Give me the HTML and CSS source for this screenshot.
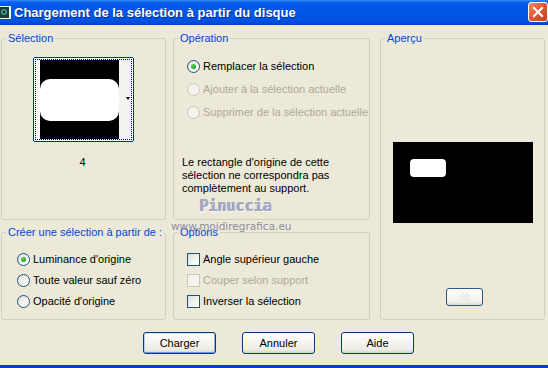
FILE: index.html
```html
<!DOCTYPE html>
<html lang="fr">
<head>
<meta charset="UTF-8">
<title>Chargement de la sélection à partir du disque</title>
<link rel="stylesheet" href="styles.css">
</head>
<body>
<div class="window">

<div class="titlebar">
  <span class="app-icon">
    <svg width="11" height="13" viewBox="0 0 11 13"><rect x="0" y="0" width="11" height="13" fill="#fff"/><rect x="0" y="1" width="9" height="11" fill="#1b3a4a"/><circle cx="4" cy="6" r="3" fill="#3fa86a"/><circle cx="4" cy="6" r="1.4" fill="#123"/></svg>
  </span>
  <span class="title">Chargement de la sélection à partir du disque</span>
  <span class="close">
    <svg width="18" height="18" viewBox="0 0 18 18"><path d="M5 5 L13 13 M13 5 L5 13" stroke="#fff" stroke-width="2.2" stroke-linecap="square"/></svg>
  </span>
</div>

<div class="content">
  <div class="groups">

    <fieldset class="group g-selection">
      <legend>Sélection</legend>
      <div class="thumb">
        <div class="thumb-focus">
          <div class="thumb-img"><div class="thumb-shape"></div></div>
          <div class="thumb-strip"><span class="thumb-arrow"></span></div>
        </div>
      </div>
      <div class="thumb-num">4</div>
    </fieldset>

    <fieldset class="group g-operation">
      <legend>Opération</legend>
      <div class="opts op-list">
        <div class="opt"><span class="radio on"></span><span>Remplacer la sélection</span></div>
        <div class="opt off"><span class="radio"></span><span>Ajouter à la sélection actuelle</span></div>
        <div class="opt off"><span class="radio"></span><span>Supprimer de la sélection actuelle</span></div>
      </div>
      <p class="note">Le rectangle d'origine de cette sélection ne correspondra pas complètement au support.</p>
    </fieldset>

    <fieldset class="group g-apercu">
      <legend>Aperçu</legend>
      <div class="preview"><div class="preview-shape"></div></div>
      <div class="mini-btn"><span class="mini-icon"></span></div>
    </fieldset>

    <fieldset class="group g-creer">
      <legend>Créer une sélection à partir de :</legend>
      <div class="opts row-list">
        <div class="opt"><span class="radio on"></span><span>Luminance d'origine</span></div>
        <div class="opt"><span class="radio"></span><span>Toute valeur sauf zéro</span></div>
        <div class="opt"><span class="radio"></span><span>Opacité d'origine</span></div>
      </div>
    </fieldset>

    <fieldset class="group g-options">
      <legend>Options</legend>
      <div class="opts row-list chk-list">
        <div class="opt"><span class="check"></span><span>Angle supérieur gauche</span></div>
        <div class="opt off"><span class="check"></span><span>Couper selon support</span></div>
        <div class="opt"><span class="check"></span><span>Inverser la sélection</span></div>
      </div>
    </fieldset>

  </div>

  <div class="buttons">
    <button class="btn default">Charger</button>
    <button class="btn">Annuler</button>
    <button class="btn">Aide</button>
  </div>
</div>

<div class="wm-name">Pinuccia</div>
<div class="wm-url">www.moidiregrafica.eu</div>

</div>
</body>
</html>
```

FILE: styles.css
```css
body
{
margin:0;
padding:0;
background:#ECE9D8;
font-family:"Liberation Sans", Arial, sans-serif;
font-size:11px;
line-height:13px;
color:#000;
}

.window
{
position:relative;
width:548px;
height:368px;
background:#ECE9D8;
display:flex;
flex-direction:column;
overflow:hidden;
box-sizing:border-box;
border-bottom:3px solid #0A3DD6;
}

/* ---------- title bar ---------- */

.titlebar
{
height:25px;
flex:none;
display:flex;
align-items:center;
background:linear-gradient(#3C8DF8 0, #0B62F0 2px, #0058E8 5px, #0055E4 55%, #0052E0 85%, #0043CC 100%);
color:#fff;
}

.app-icon
{
display:flex;
width:11px;
height:13px;
margin-top:-1px;
}

.title
{
margin-left:3px;
font-family:"Liberation Sans", Arial, sans-serif;
font-weight:bold;
font-size:13px;
text-shadow:1px 1px 0 #0A2E8C;
white-space:nowrap;
}

.close
{
margin-left:auto;
width:20px;
height:20px;
box-sizing:border-box;
border:1px solid #fff;
border-radius:3px;
background:linear-gradient(135deg, #F08E6C 0%, #E05A34 45%, #C4401C 100%);
display:flex;
align-items:center;
justify-content:center;
margin-top:-2px;
}

/* ---------- group boxes ---------- */

.content
{
flex:1;
display:flex;
flex-direction:column;
}

.groups
{
display:grid;
grid-template-columns:165px 197px 168px;
grid-template-rows:188px 94px;
column-gap:7px;
row-gap:6px;
padding:7px 0 0 1px;
}

.group
{
margin:0;
padding:0;
min-width:0;
border:1px solid #D0D0BF;
border-radius:3px;
display:flex;
flex-direction:column;
}

.group legend
{
margin-left:4px;
padding:0 2px;
color:#0046D5;
line-height:13px;
}

.g-selection { grid-column:1; grid-row:1; }
.g-operation { grid-column:2; grid-row:1; }
.g-apercu    { grid-column:3; grid-row:1 / span 2; margin-left:3px; }
.g-creer     { grid-column:1; grid-row:2; }
.g-options   { grid-column:2; grid-row:2; }

/* ---------- selection thumbnail ---------- */

.thumb
{
align-self:center;
margin-top:12px;
width:101px;
height:85px;
box-sizing:border-box;
border:1px solid #003C74;
border-radius:2px;
background:#fff;
padding:1px;
}

.thumb-focus
{
height:100%;
box-sizing:border-box;
border:1px dotted #000;
display:flex;
padding-left:4px;
}

.thumb-img
{
width:79px;
background:#000;
display:flex;
align-items:center;
}

.thumb-shape
{
width:79px;
height:42px;
background:#fff;
border-radius:10px;
}

.thumb-strip
{
flex:1;
background:#F4F3EE;
display:flex;
align-items:center;
justify-content:flex-end;
padding-right:1px;
}

.thumb-arrow
{
width:0;
height:0;
border-left:2px solid transparent;
border-right:2px solid transparent;
border-top:3px solid #000;
margin-top:-2px;
}

.thumb-num
{
text-align:center;
margin-top:14px;
padding-right:2px;
}

/* ---------- radios & checkboxes ---------- */

.opts
{
display:flex;
flex-direction:column;
}

.op-list
{
padding:13px 0 0 13px;
gap:7px;
}

.row-list
{
padding:12px 0 0 15px;
gap:5px;
}

.chk-list
{
padding-left:13px;
}

.opt
{
display:flex;
align-items:center;
height:16px;
gap:3px;
white-space:nowrap;
}

.opt.off
{
color:#ACA899;
}

.radio
{
width:13px;
height:13px;
box-sizing:border-box;
border:1px solid #1C5180;
border-radius:50%;
background:linear-gradient(135deg, #DCDCD7 0%, #F2F2EE 50%, #FFFFFF 100%);
display:flex;
align-items:center;
justify-content:center;
flex:none;
}

.radio.on::after
{
content:"";
width:5px;
height:5px;
border-radius:50%;
background:radial-gradient(circle at 35% 35%, #5FD35F, #21A121 70%);
}

.opt.off .radio
{
border-color:#CAC8BB;
background:#F4F3EE;
}

.check
{
width:13px;
height:13px;
box-sizing:border-box;
border:1px solid #1C5180;
background:linear-gradient(135deg, #DCDCD7 0%, #F2F2EE 50%, #FFFFFF 100%);
flex:none;
}

.opt.off .check
{
border-color:#CAC8BB;
background:#F4F3EE;
}

.note
{
margin:36px 0 0 0;
padding:0 8px;
line-height:13px;
}

/* ---------- preview ---------- */

.preview
{
align-self:center;
margin-top:97px;
width:140px;
height:81px;
background:#000;
padding:17px 0 0 17px;
box-sizing:border-box;
}

.preview-shape
{
width:36px;
height:18px;
background:#fff;
border-radius:4px;
}

.mini-btn
{
align-self:center;
margin:65px 0 0 4px;
width:37px;
height:18px;
box-sizing:border-box;
border:1px solid #2D5A8A;
border-radius:3px;
background:linear-gradient(#FFFFFF, #F2F1EB 80%, #DCD8CC);
display:flex;
align-items:center;
justify-content:center;
}

.mini-icon
{
width:10px;
height:8px;
background:
  linear-gradient(45deg, #E6E6E6 25%, transparent 25%, transparent 75%, #E6E6E6 75%),
  linear-gradient(45deg, #E6E6E6 25%, transparent 25%, transparent 75%, #E6E6E6 75%);
background-size:4px 4px;
background-position:0 0, 2px 2px;
}

/* ---------- buttons ---------- */

.buttons
{
display:flex;
gap:26px;
padding-left:143px;
margin-top:12px;
}

.btn
{
width:73px;
height:22px;
box-sizing:border-box;
border:1px solid #003C74;
border-radius:3px;
background:linear-gradient(#FFFFFF 0%, #F6F5F0 40%, #ECEBE4 85%, #D6D0C5 100%);
font-family:"Liberation Sans", Arial, sans-serif;
font-size:11px;
color:#000;
padding:0;
}

.btn.default
{
box-shadow:inset 0 1px 0 #CEE7FF, inset 1px 0 0 #B6D2F7, inset -1px 0 0 #8DB2F0, inset 0 -1px 0 #6F94E6;
}

/* ---------- watermark over the dialog ---------- */

.wm-name
{
position:absolute;
left:200px;
top:200px;
font-family:"DejaVu Sans Mono", monospace;
font-size:15px;
font-weight:bold;
color:#A8AAC2;
text-shadow:1px 1px 0 #F6F6FA, -1px 0 0 #9698B0;
}

.wm-url
{
position:absolute;
left:171px;
top:220px;
font-family:"DejaVu Sans", sans-serif;
font-size:10.5px;
color:#8E8E9E;
}
```
